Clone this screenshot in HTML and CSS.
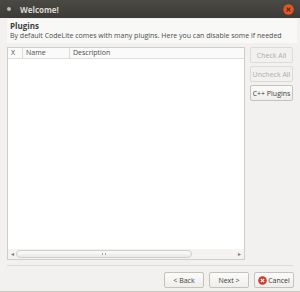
FILE: index.html
```html
<!DOCTYPE html>
<html lang="en">
<head>
  <meta charset="UTF-8">
  <title>Welcome!</title>
  <link rel="stylesheet" href="styles.css">
</head>
<body>
<div class="window">
  <div class="titlebar">
    <span class="menu-dot"></span>
    <span class="title">Welcome!</span>
    <span class="close-btn">
      <svg width="11" height="11" viewBox="0 0 11 11">
        <circle cx="5.5" cy="5.5" r="5.2" fill="#e9541f"/>
        <path d="M3.6 3.6 L7.4 7.4 M7.4 3.6 L3.6 7.4" stroke="#3a2a22" stroke-width="1.1"/>
      </svg>
    </span>
  </div>
  <div class="header">
    <div class="header-title">Plugins</div>
    <div class="header-sub">By default CodeLite comes with many plugins. Here you can disable some if needed</div>
  </div>
  <div class="main">
    <div class="list">
      <div class="list-head">
        <div class="col col-x">X</div>
        <div class="col col-name">Name</div>
        <div class="col col-desc">Description</div>
      </div>
      <div class="list-body"></div>
      <div class="hscroll">
        <span class="arrow">&#9666;</span>
        <div class="track"><div class="thumb"><span class="grip"></span></div></div>
        <span class="arrow">&#9656;</span>
      </div>
    </div>
    <div class="side">
      <button class="btn" disabled>Check All</button>
      <button class="btn" disabled>Uncheck All</button>
      <button class="btn">C++ Plugins</button>
    </div>
  </div>
  <div class="sep"></div>
  <div class="footer">
    <button class="btn nav-btn">&lt; Back</button>
    <button class="btn nav-btn">Next &gt;</button>
    <button class="btn nav-btn cancel-btn">
      <svg width="9" height="9" viewBox="0 0 9 9">
        <circle cx="4.5" cy="4.5" r="4.3" fill="#d23a2a"/>
        <path d="M2.8 2.8 L6.2 6.2 M6.2 2.8 L2.8 6.2" stroke="#fff" stroke-width="1.2"/>
      </svg>Cancel
    </button>
  </div>
</div>
</body>
</html>
```

FILE: styles.css
```css
* { margin: 0; padding: 0; box-sizing: border-box; font-family: "Open Sans", "DejaVu Sans", sans-serif; }
body { width: 300px; height: 292px; background-color: #f2f1f0; overflow: hidden; }
.window { display: flex; flex-direction: column; height: 292px; border-bottom: 1px solid #c9c7c4; }
.titlebar { height: 18px; background: linear-gradient(#4a4944, #3c3b37); display: flex; align-items: center; padding: 0 6px 0 7px; }
.menu-dot { width: 4px; height: 4px; border-radius: 50%; background-color: #bdb9b1; margin-right: 9px; }
.title { color: #dcd8cf; font-size: 8px; font-weight: bold; flex: 1; }
.close-btn { display: flex; }
.header { background-color: #f8f8f7; margin: 1px 3px 0 7px; padding: 2px 3px; }
.header-title { font-size: 8px; font-weight: bold; color: #3c3c3c; line-height: 10px; }
.header-sub { font-size: 7px; color: #4c4c4c; line-height: 10px; }
.main { display: flex; flex: 1; padding: 4px 7px 0 7px; gap: 5px; }
.list { flex: 1; display: flex; flex-direction: column; border: 1px solid #cfcdca; background-color: #fff; }
.list-head { display: flex; height: 11px; border-bottom: 1px solid #dedcd9; background-color: #fafafa; }
.col { font-size: 7px; color: #4a4a4a; line-height: 10px; padding-left: 3px; border-right: 1px solid #dedcd9; }
.col-x { width: 15px; }
.col-name { width: 47px; }
.col-desc { flex: 1; border-right: none; }
.list-body { flex: 1; }
.hscroll { height: 10px; display: flex; align-items: center; padding: 0 1px; background-color: #f4f3f2; }
.arrow { font-size: 6px; color: #777; width: 7px; text-align: center; line-height: 8px; }
.track { flex: 1; height: 8px; }
.thumb { width: 176px; height: 8px; border: 1px solid #d0cecb; border-radius: 4px; background: linear-gradient(#fbfbfa, #eceae8); display: flex; justify-content: center; align-items: center; }
.grip { width: 4px; height: 2px; border-left: 1px solid #aaa; border-right: 1px solid #aaa; }
.side { width: 43px; display: flex; flex-direction: column; gap: 3px; }
.btn { height: 16px; font-size: 7px; color: #3c3c3c; background: linear-gradient(#fbfbfa, #efeeec); border: 1px solid #c4c2be; border-radius: 2px; }
.btn:disabled { color: #aeaca8; border-color: #dddbd8; background: #f2f1f0; }
.sep { height: 1px; background-color: #dcdad6; margin: 5px 7px 0 7px; }
.footer { display: flex; justify-content: flex-end; gap: 5px; padding: 6px 6px 3px 0; }
.nav-btn { width: 40px; }
.cancel-btn { display: flex; align-items: center; justify-content: center; gap: 1px; }
```
